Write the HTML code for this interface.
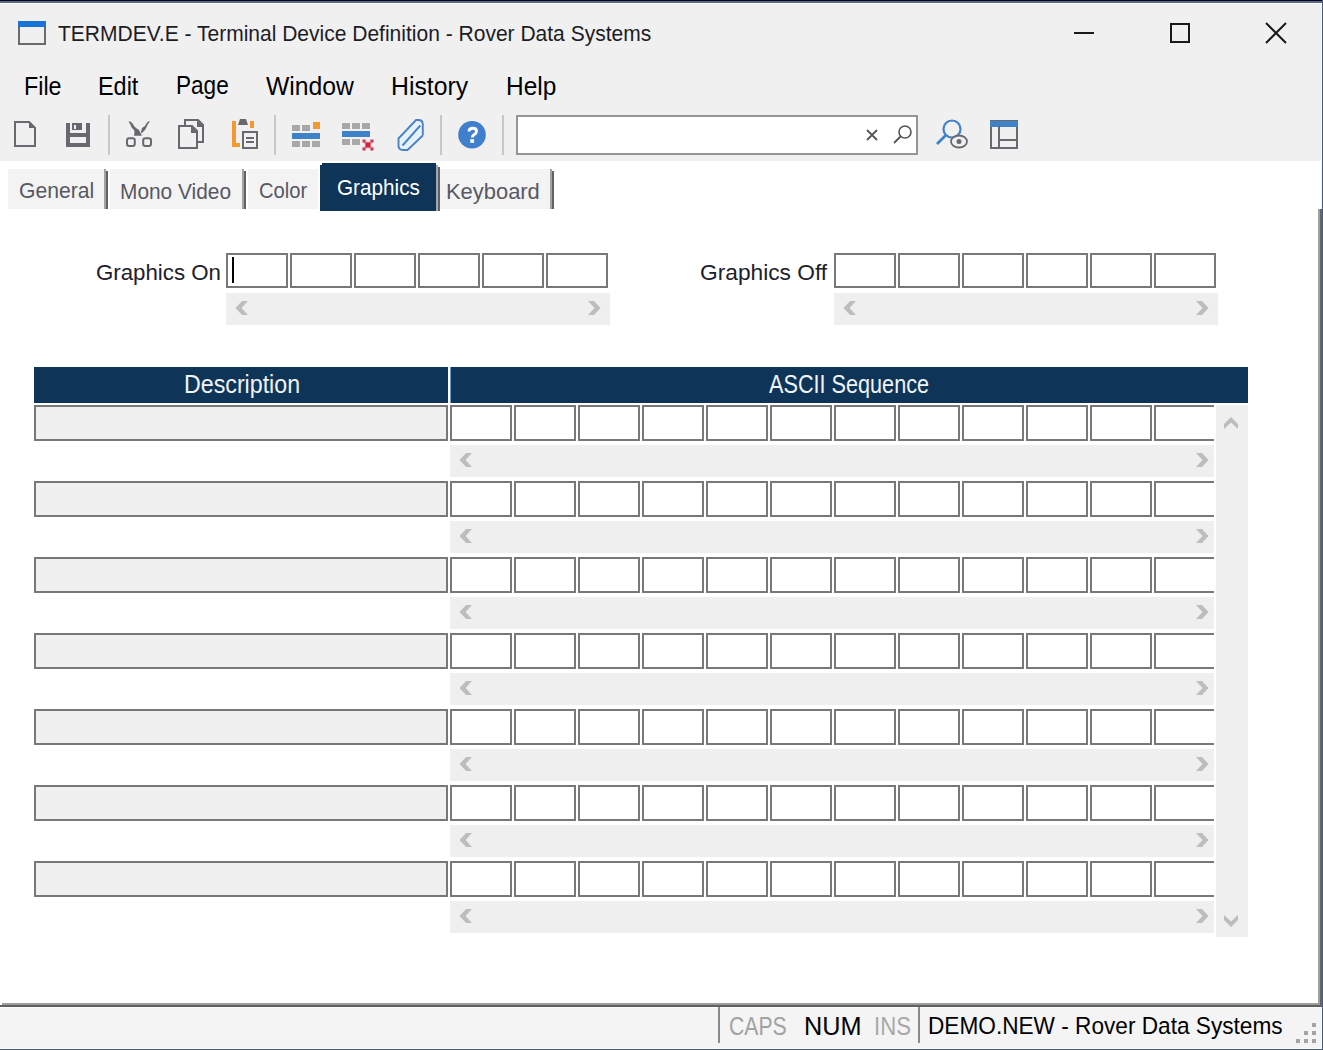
<!DOCTYPE html>
<html><head><meta charset="utf-8">
<style>
html,body{margin:0;padding:0}
body{width:1323px;height:1050px;position:relative;overflow:hidden;background:#fff;font-family:"Liberation Sans",sans-serif;color:#000}
.a{position:absolute}
.t{position:absolute;white-space:pre;line-height:1}
.sep{position:absolute;width:2px;background:#c6c6c6}
.cell{position:absolute;width:58px;height:32px;border:2px solid #787878;background:#fff}
.hs{position:absolute;background:#efefef}
.desc{position:absolute;left:34px;width:410px;height:32px;border:2px solid #787878;background:#f0f0f0}
.tab{position:absolute;top:169px;height:40px;background:#f3f3f3}
.tabsep{position:absolute;width:3px;background:#707070}
.tabtxt{position:absolute;font-size:21px;color:#4e4e58;white-space:pre;line-height:1}
</style></head><body>
<!-- chrome -->
<div class="a" style="left:0;top:0;width:1323px;height:161px;background:#f0f0f0"></div>
<div class="a" style="left:0;top:0;width:1323px;height:1px;background:#000522"></div>
<div class="a" style="left:0;top:1px;width:1323px;height:2px;background:#5d6985"></div>
<div class="a" style="left:0;top:3px;width:1323px;height:1px;background:#f2f9ff"></div>
<div class="a" style="left:0;top:4px;width:1323px;height:2px;background:#edf1f2"></div>
<div class="a" style="left:1322px;top:0;width:1px;height:1050px;background:#4c5880"></div>
<div class="a" style="left:1321px;top:3px;width:1px;height:1046px;background:#f2f8ff"></div>
<div class="a" style="left:1318px;top:209px;width:2px;height:794px;background:#a0a29a"></div>
<div class="a" style="left:1320px;top:209px;width:1px;height:798px;background:#62666a"></div>
<div class="a" style="left:1321px;top:209px;width:1px;height:798px;background:#5e6882"></div>

<!-- title -->
<div class="a" style="left:18px;top:21px;width:24px;height:22px;border:2px solid #6a6a6a;border-top:0;background:#f0f0f0"></div>
<div class="a" style="left:18px;top:21px;width:28px;height:6px;background:#1a73d9"></div>
<div class="a" style="left:1074px;top:32px;width:20px;height:2px;background:#1a1a1a"></div>
<div class="a" style="left:1170px;top:23px;width:16px;height:16px;border:2px solid #1a1a1a"></div>
<svg class="a" style="left:1264px;top:21px" width="24" height="24"><path d="M2 2L22 22M22 2L2 22" stroke="#1a1a1a" stroke-width="2"/></svg>

<!-- menu -->

<!-- toolbar -->
<div class="sep" style="left:108px;top:115px;height:40px"></div>
<div class="sep" style="left:274px;top:115px;height:40px"></div>
<div class="sep" style="left:440px;top:115px;height:40px"></div>
<div class="sep" style="left:502px;top:115px;height:40px"></div>
<div class="a" style="left:516px;top:115px;width:398px;height:36px;border:2px solid #959595;background:#fff"></div>
<svg class="a" style="left:0;top:0" width="1040" height="161"><path d="M15 122H29L35 128V146H15Z" fill="none" stroke="#68686e" stroke-width="2"/><path d="M29 121L36 128H29Z" fill="#68686e"/><path d="M66 123H70V133H86V123H90V147H66Z" fill="#68686e"/><rect x="66" y="133" width="24" height="14" fill="#68686e"/><rect x="70" y="137" width="16" height="6" fill="#f0f0f0"/><rect x="72" y="123" width="10" height="7" fill="#68686e"/><rect x="74" y="125" width="2" height="4" fill="#f0f0f0"/><path d="M128.5 121.5L130.5 121.5L133 124L134 126L136 128L139 130L140 132L142 135.8L134 135.8L134.5 132L134 130L132 128L131 126L130 124Z" fill="#68686e"/><path d="M148 121.5L150 121.5L148 124L147 126L146 128L145 130L143 132L141 133.5L141 132L142 128L145 126L146 124Z" fill="#68686e"/><rect x="127" y="138.3" width="7.8" height="7.6" rx="2.2" fill="none" stroke="#68686e" stroke-width="2"/><rect x="143.2" y="138.3" width="7.8" height="7.6" rx="2.2" fill="none" stroke="#68686e" stroke-width="2"/><path d="M185 120H198L203 125V142H185Z" fill="#f0f0f0" stroke="#68686e" stroke-width="2"/><path d="M197 120L204 127H197Z" fill="#68686e"/><path d="M179 126H192L197 131V148H179Z" fill="#f0f0f0" stroke="#68686e" stroke-width="2"/><path d="M191 126L198 133H191Z" fill="#68686e"/><path d="M232 121H236V143H240V147H232Z" fill="#f09a30"/><rect x="250" y="121" width="4" height="7" fill="#f09a30"/><path d="M240 119H246L248 125H238Z" fill="#68686e"/><rect x="243" y="132" width="14" height="16" fill="#f0f0f0" stroke="#68686e" stroke-width="2"/><rect x="246" y="137" width="8" height="2" fill="#68686e"/><rect x="246" y="141" width="8" height="2" fill="#68686e"/><rect x="292" y="125" width="8" height="6" fill="#a8a8a8"/><rect x="302" y="125" width="8" height="6" fill="#a8a8a8"/><rect x="313" y="122" width="7" height="7" fill="#f09a30"/><rect x="292" y="133" width="28" height="6" fill="#3f82c8"/><rect x="292" y="141" width="8" height="6" fill="#a8a8a8"/><rect x="302" y="141" width="8" height="6" fill="#a8a8a8"/><rect x="312" y="141" width="8" height="6" fill="#a8a8a8"/><rect x="342" y="123" width="8" height="6" fill="#a8a8a8"/><rect x="352" y="123" width="8" height="6" fill="#a8a8a8"/><rect x="362" y="123" width="8" height="6" fill="#a8a8a8"/><rect x="342" y="131" width="28" height="6" fill="#3f82c8"/><rect x="342" y="139" width="8" height="6" fill="#a8a8a8"/><rect x="352" y="139" width="8" height="6" fill="#a8a8a8"/><path d="M363.5 140.5L372.5 149.5M372.5 140.5L363.5 149.5" stroke="#eba7b5" stroke-width="3.2"/><rect x="365.5" y="142.5" width="5" height="5" fill="#d0223c"/><rect x="362.5" y="139.5" width="3" height="3" fill="#c8405a"/><rect x="370.5" y="139.5" width="3" height="3" fill="#c8405a"/><rect x="362.5" y="147.5" width="3" height="3" fill="#c8405a"/><rect x="370.5" y="147.5" width="3" height="3" fill="#c8405a"/><path d="M422.8 135.5V124.5Q422.8 120 418.5 120H416L398.5 138.5V145.5Q398.5 150 403 150H407.5L422.8 135.5" fill="#e6f2fb" stroke="#4d82c2" stroke-width="1.9"/><path d="M402.5 145.5L420.3 125.5" stroke="#4d82c2" stroke-width="1.9"/><circle cx="472" cy="134.7" r="13.8" fill="#3f7fcb"/><path d="M469 131.5Q469 128.3 472.8 128.3Q476.5 128.3 476.5 131.3Q476.5 133.3 474 134.8Q472.3 135.8 472.3 137.5" fill="none" stroke="#fff" stroke-width="2.9"/><rect x="470.3" y="139.2" width="3.8" height="3.6" fill="#fff"/><path d="M867 130L877 140M877 130L867 140" stroke="#555" stroke-width="1.8"/><circle cx="905" cy="132" r="6" fill="none" stroke="#555" stroke-width="1.6"/><path d="M900.5 136.5L894 143" stroke="#555" stroke-width="1.8"/><circle cx="952" cy="129" r="8.5" fill="none" stroke="#3f82c8" stroke-width="2.2"/><path d="M946 135L937 144" stroke="#3f82c8" stroke-width="2.8"/><ellipse cx="959" cy="141.5" rx="8" ry="6" fill="#f0f0f0" stroke="#68686e" stroke-width="1.8"/><circle cx="959" cy="141.5" r="2.5" fill="#68686e"/><rect x="991" y="121" width="26" height="27" fill="none" stroke="#68686e" stroke-width="2"/><rect x="990" y="121" width="28" height="6" fill="#3f82c8"/><rect x="998" y="126" width="2" height="22" fill="#68686e"/><rect x="998" y="139" width="20" height="2" fill="#68686e"/></svg>

<!-- content -->
<div class="tab" style="left:8px;width:96px"></div><div class="a" style="left:104px;top:169px;width:2px;height:40px;background:#a2a2a2"></div><div class="a" style="left:106px;top:171px;width:2px;height:38px;background:#626262"></div><div class="tab" style="left:110px;width:132px"></div><div class="a" style="left:242px;top:169px;width:2px;height:40px;background:#a2a2a2"></div><div class="a" style="left:244px;top:171px;width:2px;height:38px;background:#626262"></div><div class="tab" style="left:248px;width:70px"></div><div class="tab" style="left:440px;width:110px"></div><div class="a" style="left:550px;top:169px;width:2px;height:40px;background:#a2a2a2"></div><div class="a" style="left:552px;top:171px;width:2px;height:38px;background:#626262"></div><div class="a" style="left:320px;top:165px;width:116px;height:46px;background:#0e3558"></div><div class="a" style="left:322px;top:163px;width:114px;height:2px;background:#0e3558"></div><div class="a" style="left:436px;top:165px;width:2px;height:46px;background:#a2a8b2"></div><div class="a" style="left:438px;top:167px;width:2px;height:44px;background:#626262"></div><div class="hs" style="left:226px;top:293px;width:384px;height:32px"></div><div class="cell" style="left:226px;top:253px;height:31px"></div><div class="cell" style="left:290px;top:253px;height:31px"></div><div class="cell" style="left:354px;top:253px;height:31px"></div><div class="cell" style="left:418px;top:253px;height:31px"></div><div class="cell" style="left:482px;top:253px;height:31px"></div><div class="cell" style="left:546px;top:253px;height:31px"></div><div class="hs" style="left:834px;top:293px;width:384px;height:32px"></div><div class="cell" style="left:834px;top:253px;height:31px"></div><div class="cell" style="left:898px;top:253px;height:31px"></div><div class="cell" style="left:962px;top:253px;height:31px"></div><div class="cell" style="left:1026px;top:253px;height:31px"></div><div class="cell" style="left:1090px;top:253px;height:31px"></div><div class="cell" style="left:1154px;top:253px;height:31px"></div><div class="a" style="left:232px;top:257px;width:2px;height:26px;background:#000"></div><div class="a" style="left:34px;top:367px;width:414px;height:36px;background:#0e3558"></div><div class="a" style="left:450px;top:367px;width:798px;height:36px;background:#0e3558"></div><div class="a" style="left:450px;top:367px;width:1px;height:36px;background:#6a9ad8"></div><div class="desc" style="top:405px"></div><div class="a" style="left:450px;top:405px;width:764px;height:36px;overflow:hidden"><div class="cell" style="left:0px;top:0"></div><div class="cell" style="left:64px;top:0"></div><div class="cell" style="left:128px;top:0"></div><div class="cell" style="left:192px;top:0"></div><div class="cell" style="left:256px;top:0"></div><div class="cell" style="left:320px;top:0"></div><div class="cell" style="left:384px;top:0"></div><div class="cell" style="left:448px;top:0"></div><div class="cell" style="left:512px;top:0"></div><div class="cell" style="left:576px;top:0"></div><div class="cell" style="left:640px;top:0"></div><div class="cell" style="left:704px;top:0"></div></div><div class="hs" style="left:450px;top:445px;width:764px;height:32px"></div><div class="desc" style="top:481px"></div><div class="a" style="left:450px;top:481px;width:764px;height:36px;overflow:hidden"><div class="cell" style="left:0px;top:0"></div><div class="cell" style="left:64px;top:0"></div><div class="cell" style="left:128px;top:0"></div><div class="cell" style="left:192px;top:0"></div><div class="cell" style="left:256px;top:0"></div><div class="cell" style="left:320px;top:0"></div><div class="cell" style="left:384px;top:0"></div><div class="cell" style="left:448px;top:0"></div><div class="cell" style="left:512px;top:0"></div><div class="cell" style="left:576px;top:0"></div><div class="cell" style="left:640px;top:0"></div><div class="cell" style="left:704px;top:0"></div></div><div class="hs" style="left:450px;top:521px;width:764px;height:32px"></div><div class="desc" style="top:557px"></div><div class="a" style="left:450px;top:557px;width:764px;height:36px;overflow:hidden"><div class="cell" style="left:0px;top:0"></div><div class="cell" style="left:64px;top:0"></div><div class="cell" style="left:128px;top:0"></div><div class="cell" style="left:192px;top:0"></div><div class="cell" style="left:256px;top:0"></div><div class="cell" style="left:320px;top:0"></div><div class="cell" style="left:384px;top:0"></div><div class="cell" style="left:448px;top:0"></div><div class="cell" style="left:512px;top:0"></div><div class="cell" style="left:576px;top:0"></div><div class="cell" style="left:640px;top:0"></div><div class="cell" style="left:704px;top:0"></div></div><div class="hs" style="left:450px;top:597px;width:764px;height:32px"></div><div class="desc" style="top:633px"></div><div class="a" style="left:450px;top:633px;width:764px;height:36px;overflow:hidden"><div class="cell" style="left:0px;top:0"></div><div class="cell" style="left:64px;top:0"></div><div class="cell" style="left:128px;top:0"></div><div class="cell" style="left:192px;top:0"></div><div class="cell" style="left:256px;top:0"></div><div class="cell" style="left:320px;top:0"></div><div class="cell" style="left:384px;top:0"></div><div class="cell" style="left:448px;top:0"></div><div class="cell" style="left:512px;top:0"></div><div class="cell" style="left:576px;top:0"></div><div class="cell" style="left:640px;top:0"></div><div class="cell" style="left:704px;top:0"></div></div><div class="hs" style="left:450px;top:673px;width:764px;height:32px"></div><div class="desc" style="top:709px"></div><div class="a" style="left:450px;top:709px;width:764px;height:36px;overflow:hidden"><div class="cell" style="left:0px;top:0"></div><div class="cell" style="left:64px;top:0"></div><div class="cell" style="left:128px;top:0"></div><div class="cell" style="left:192px;top:0"></div><div class="cell" style="left:256px;top:0"></div><div class="cell" style="left:320px;top:0"></div><div class="cell" style="left:384px;top:0"></div><div class="cell" style="left:448px;top:0"></div><div class="cell" style="left:512px;top:0"></div><div class="cell" style="left:576px;top:0"></div><div class="cell" style="left:640px;top:0"></div><div class="cell" style="left:704px;top:0"></div></div><div class="hs" style="left:450px;top:749px;width:764px;height:32px"></div><div class="desc" style="top:785px"></div><div class="a" style="left:450px;top:785px;width:764px;height:36px;overflow:hidden"><div class="cell" style="left:0px;top:0"></div><div class="cell" style="left:64px;top:0"></div><div class="cell" style="left:128px;top:0"></div><div class="cell" style="left:192px;top:0"></div><div class="cell" style="left:256px;top:0"></div><div class="cell" style="left:320px;top:0"></div><div class="cell" style="left:384px;top:0"></div><div class="cell" style="left:448px;top:0"></div><div class="cell" style="left:512px;top:0"></div><div class="cell" style="left:576px;top:0"></div><div class="cell" style="left:640px;top:0"></div><div class="cell" style="left:704px;top:0"></div></div><div class="hs" style="left:450px;top:825px;width:764px;height:32px"></div><div class="desc" style="top:861px"></div><div class="a" style="left:450px;top:861px;width:764px;height:36px;overflow:hidden"><div class="cell" style="left:0px;top:0"></div><div class="cell" style="left:64px;top:0"></div><div class="cell" style="left:128px;top:0"></div><div class="cell" style="left:192px;top:0"></div><div class="cell" style="left:256px;top:0"></div><div class="cell" style="left:320px;top:0"></div><div class="cell" style="left:384px;top:0"></div><div class="cell" style="left:448px;top:0"></div><div class="cell" style="left:512px;top:0"></div><div class="cell" style="left:576px;top:0"></div><div class="cell" style="left:640px;top:0"></div><div class="cell" style="left:704px;top:0"></div></div><div class="hs" style="left:450px;top:901px;width:764px;height:32px"></div><div class="hs" style="left:1216px;top:405px;width:32px;height:532px"></div><svg class="a" style="left:0;top:0" width="1323" height="1000"><path d="M242 301L248 301L241.5 308L248 315L242 315L235.5 308Z" fill="#bdbdbd"/><path d="M594 301L588 301L594.5 308L588 315L594 315L600.5 308Z" fill="#bdbdbd"/><path d="M850 301L856 301L849.5 308L856 315L850 315L843.5 308Z" fill="#bdbdbd"/><path d="M1202 301L1196 301L1202.5 308L1196 315L1202 315L1208.5 308Z" fill="#bdbdbd"/><path d="M466 453L472 453L465.5 460L472 467L466 467L459.5 460Z" fill="#bdbdbd"/><path d="M1202 453L1196 453L1202.5 460L1196 467L1202 467L1208.5 460Z" fill="#bdbdbd"/><path d="M466 529L472 529L465.5 536L472 543L466 543L459.5 536Z" fill="#bdbdbd"/><path d="M1202 529L1196 529L1202.5 536L1196 543L1202 543L1208.5 536Z" fill="#bdbdbd"/><path d="M466 605L472 605L465.5 612L472 619L466 619L459.5 612Z" fill="#bdbdbd"/><path d="M1202 605L1196 605L1202.5 612L1196 619L1202 619L1208.5 612Z" fill="#bdbdbd"/><path d="M466 681L472 681L465.5 688L472 695L466 695L459.5 688Z" fill="#bdbdbd"/><path d="M1202 681L1196 681L1202.5 688L1196 695L1202 695L1208.5 688Z" fill="#bdbdbd"/><path d="M466 757L472 757L465.5 764L472 771L466 771L459.5 764Z" fill="#bdbdbd"/><path d="M1202 757L1196 757L1202.5 764L1196 771L1202 771L1208.5 764Z" fill="#bdbdbd"/><path d="M466 833L472 833L465.5 840L472 847L466 847L459.5 840Z" fill="#bdbdbd"/><path d="M1202 833L1196 833L1202.5 840L1196 847L1202 847L1208.5 840Z" fill="#bdbdbd"/><path d="M466 909L472 909L465.5 916L472 923L466 923L459.5 916Z" fill="#bdbdbd"/><path d="M1202 909L1196 909L1202.5 916L1196 923L1202 923L1208.5 916Z" fill="#bdbdbd"/><path d="M1231 417L1238 424L1238 429L1231 422.5L1224 429L1224 424Z" fill="#bdbdbd"/><path d="M1224 915L1231 921.5L1238 915L1238 920L1231 927L1224 920Z" fill="#bdbdbd"/></svg>

<!-- status bar -->
<div class="a" style="left:2px;top:1003px;width:1318px;height:2px;background:#9d9d9d"></div>
<div class="a" style="left:0;top:1005px;width:1321px;height:2px;background:#606060"></div>
<div class="a" style="left:0;top:1007px;width:1321px;height:1px;background:#fcfcfc"></div>
<div class="a" style="left:0;top:1008px;width:1321px;height:40px;background:#f4f4f4"></div>
<div class="a" style="left:0;top:1048px;width:1322px;height:1px;background:#f8fdff"></div>
<div class="a" style="left:0;top:1049px;width:1323px;height:1px;background:#4f5b72"></div>
<div class="a" style="left:718px;top:1007px;width:2px;height:36px;background:#8a8a8a"></div>
<div class="a" style="left:918px;top:1007px;width:2px;height:36px;background:#8a8a8a"></div>
<div class="t" style="left:58.0px;top:22.5px;font-size:21.79px;color:#1c1c24;transform:scaleX(0.9647);transform-origin:0 0">TERMDEV.E - Terminal Device Definition - Rover Data Systems</div>
<div class="t" style="left:23.65px;top:74.0px;font-size:25.14px;color:#000;transform:scaleX(0.927);transform-origin:0 0">File</div>
<div class="t" style="left:98.04px;top:74.0px;font-size:25.14px;color:#000;transform:scaleX(0.9317);transform-origin:0 0">Edit</div>
<div class="t" style="left:176.2px;top:73.0px;font-size:25.14px;color:#000;transform:scaleX(0.8982);transform-origin:0 0">Page</div>
<div class="t" style="left:266.4px;top:74.0px;font-size:25.14px;color:#000;transform:scaleX(0.9843);transform-origin:0 0">Window</div>
<div class="t" style="left:390.73px;top:74.0px;font-size:25.14px;color:#000;transform:scaleX(0.9868);transform-origin:0 0">History</div>
<div class="t" style="left:505.65px;top:74.0px;font-size:25.14px;color:#000;transform:scaleX(0.9735);transform-origin:0 0">Help</div>
<div class="t" style="left:18.6px;top:180.1px;font-size:21.23px;color:#585862;transform:scaleX(0.9959);transform-origin:0 0">General</div>
<div class="t" style="left:119.65px;top:181.8px;font-size:21.37px;color:#585862;transform:scaleX(0.9775);transform-origin:0 0">Mono Video</div>
<div class="t" style="left:259.05px;top:180.1px;font-size:21.23px;color:#585862;transform:scaleX(0.952);transform-origin:0 0">Color</div>
<div class="t" style="left:336.85px;top:176.9px;font-size:21.79px;color:#fff;transform:scaleX(0.9506);transform-origin:0 0">Graphics</div>
<div class="t" style="left:445.76px;top:181.6px;font-size:21.51px;color:#585862;transform:scaleX(1.0191);transform-origin:0 0">Keyboard</div>
<div class="t" style="left:96.1px;top:262.0px;font-size:22.21px;color:#20202a;transform:scaleX(1.0025);transform-origin:0 0">Graphics On</div>
<div class="t" style="left:700.38px;top:262.0px;font-size:22.21px;color:#20202a;transform:scaleX(1.0236);transform-origin:0 0">Graphics Off</div>
<div class="t" style="left:183.75px;top:372.0px;font-size:25.14px;color:#f0f3f7;transform:scaleX(0.9238);transform-origin:0 0">Description</div>
<div class="t" style="left:768.6px;top:372.0px;font-size:25.14px;color:#f0f3f7;transform:scaleX(0.8616);transform-origin:0 0">ASCII Sequence</div>
<div class="t" style="left:729.16px;top:1014.0px;font-size:25.14px;color:#a2a2a2;transform:scaleX(0.8439);transform-origin:0 0">CAPS</div>
<div class="t" style="left:803.99px;top:1014.0px;font-size:25.14px;color:#000;transform:scaleX(1.0057);transform-origin:0 0">NUM</div>
<div class="t" style="left:873.84px;top:1014.0px;font-size:25.14px;color:#a8a8a8;transform:scaleX(0.8821);transform-origin:0 0">INS</div>
<div class="t" style="left:927.85px;top:1014.1px;font-size:24.44px;color:#000;transform:scaleX(0.9261);transform-origin:0 0">DEMO.NEW - Rover Data Systems</div>
<div class="a" style="left:1312px;top:1023px;width:4px;height:4px;background:#a4a4a4"></div><div class="a" style="left:1304px;top:1031px;width:4px;height:4px;background:#a4a4a4"></div><div class="a" style="left:1312px;top:1031px;width:4px;height:4px;background:#a4a4a4"></div><div class="a" style="left:1296px;top:1039px;width:4px;height:4px;background:#a4a4a4"></div><div class="a" style="left:1304px;top:1039px;width:4px;height:4px;background:#a4a4a4"></div><div class="a" style="left:1312px;top:1039px;width:4px;height:4px;background:#a4a4a4"></div>
</body></html>
